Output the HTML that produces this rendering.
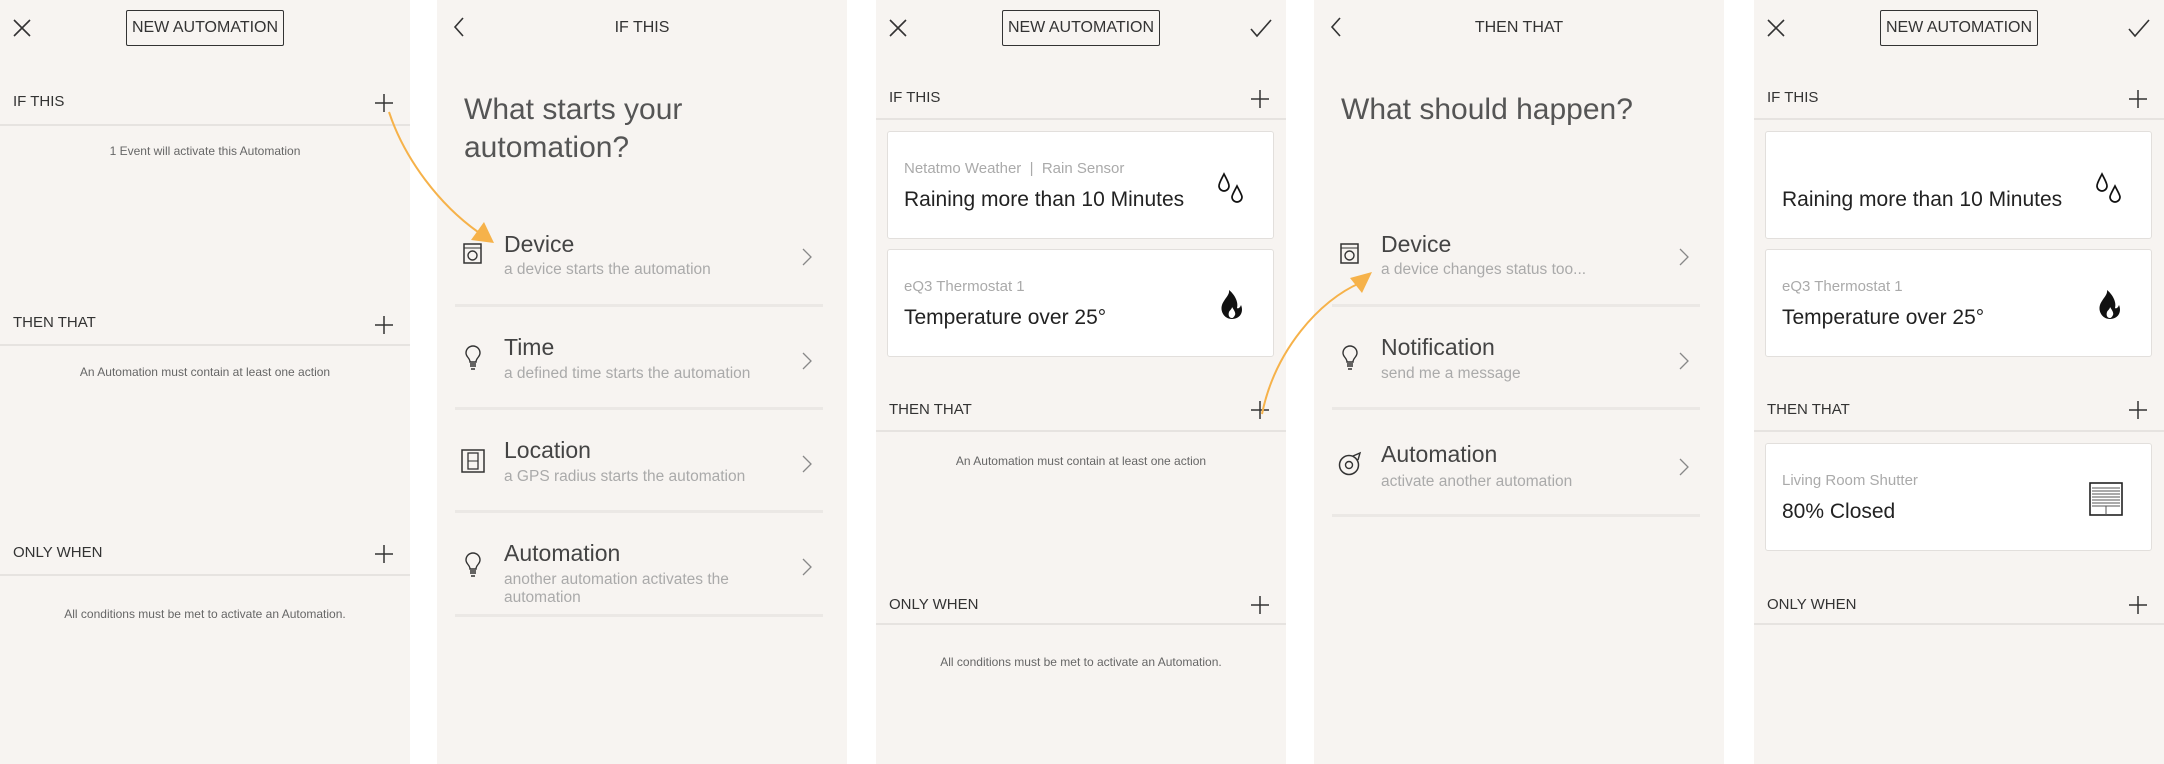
<!DOCTYPE html>
<html><head><meta charset="utf-8"><style>
*{margin:0;padding:0;box-sizing:border-box}
body{width:2164px;height:764px;background:#fff;position:relative;overflow:hidden;font-family:"Liberation Sans",sans-serif;color:#333}
.p{position:absolute;top:0;width:410px;height:764px;background:#f7f4f1}
.a{position:absolute;white-space:nowrap}
.hl{position:absolute;left:0;right:0;height:2px;background:#e6e3e0}
.sep{position:absolute;left:18px;right:24px;height:3px;background:#ebe8e5}
.lab{font-size:15px;color:#333;left:13px}
.sm{font-size:12px;color:#666;left:0;right:0;text-align:center}
.box{position:absolute;border:1.5px solid #333;border-radius:2px;font-size:16px;text-align:center;line-height:33px;height:36px}
.ttl{font-size:16px;left:0;right:0;text-align:center;color:#333}
.h{font-size:30px;color:#555;left:27px;line-height:38px}
.it{font-size:23px;color:#444;left:67px}
.sub{font-size:15.5px;color:#aaa;left:67px;line-height:18px}
.card{position:absolute;left:11px;right:12px;background:#fff;border:1.5px solid #e2dfdc;border-radius:3px}
.cl{font-size:15px;color:#aaa;left:16px}
.cm{font-size:21px;color:#222;left:16px}
svg{position:absolute;overflow:visible}
</style></head><body>

<!-- Panel 1 -->
<div class="p" style="left:0">
<svg style="left:13px;top:19px" width="18" height="18"><path d="M1 1L17 17M17 1L1 17" stroke="#333" stroke-width="1.6"/></svg>
<div class="box" style="left:126px;top:10px;width:158px">NEW AUTOMATION</div>
<div class="a lab" style="top:93px">IF THIS</div>
<svg style="left:375px;top:94px" width="18" height="18"><path d="M9 0V18M0 9H18" stroke="#333" stroke-width="1.5"/></svg>
<div class="hl" style="top:124px"></div>
<div class="a sm" style="top:144px">1 Event will activate this Automation</div>
<div class="a lab" style="top:314px">THEN THAT</div>
<svg style="left:375px;top:316px" width="18" height="18"><path d="M9 0V18M0 9H18" stroke="#333" stroke-width="1.5"/></svg>
<div class="hl" style="top:344px"></div>
<div class="a sm" style="top:365px">An Automation must contain at least one action</div>
<div class="a lab" style="top:544px">ONLY WHEN</div>
<svg style="left:375px;top:545px" width="18" height="18"><path d="M9 0V18M0 9H18" stroke="#333" stroke-width="1.5"/></svg>
<div class="hl" style="top:574px"></div>
<div class="a sm" style="top:607px">All conditions must be met to activate an Automation.</div>
</div>

<!-- Panel 2 -->
<div class="p" style="left:437px">
<svg style="left:16px;top:17px" width="12" height="20"><path d="M10 1L2 10L10 19" stroke="#333" stroke-width="1.6" fill="none"/></svg>
<div class="a ttl" style="top:19px">IF THIS</div>
<div class="a h" style="top:91px">What starts your<br>automation?</div>
<svg style="left:26px;top:243px" width="20" height="22"><rect x="1" y="1" width="17" height="19" fill="none" stroke="#333" stroke-width="1.5"/><path d="M1 5H18" stroke="#333"/><circle cx="9.5" cy="12.5" r="4.5" fill="none" stroke="#333" stroke-width="1.4"/></svg>
<div class="a it" style="top:231px">Device</div>
<div class="a sub" style="top:261px">a device starts the automation</div>
<svg style="left:365px;top:248px" width="10" height="18"><path d="M1 1L9 9L1 17" stroke="#888" stroke-width="1.3" fill="none"/></svg>
<div class="sep" style="top:304px"></div>
<svg style="left:28px;top:346px" width="16" height="24"><path d="M5 16C5 12 1 11 1 7A7 7 0 0 1 15 7C15 11 11 12 11 16ZM5 18H11M5 20H11M6 23H10" stroke="#333" stroke-width="1.4" fill="none"/></svg>
<div class="a it" style="top:334px">Time</div>
<div class="a sub" style="top:365px">a defined time starts the automation</div>
<svg style="left:365px;top:352px" width="10" height="18"><path d="M1 1L9 9L1 17" stroke="#888" stroke-width="1.3" fill="none"/></svg>
<div class="sep" style="top:407px"></div>
<svg style="left:24px;top:449px" width="24" height="24"><rect x="1" y="1" width="22" height="22" fill="none" stroke="#333" stroke-width="1.5"/><rect x="7" y="4" width="10" height="16" fill="none" stroke="#333" stroke-width="1.3"/><path d="M7 12H17" stroke="#333"/></svg>
<div class="a it" style="top:437px">Location</div>
<div class="a sub" style="top:468px">a GPS radius starts the automation</div>
<svg style="left:365px;top:455px" width="10" height="18"><path d="M1 1L9 9L1 17" stroke="#888" stroke-width="1.3" fill="none"/></svg>
<div class="sep" style="top:510px"></div>
<svg style="left:28px;top:553px" width="16" height="24"><path d="M5 16C5 12 1 11 1 7A7 7 0 0 1 15 7C15 11 11 12 11 16ZM5 18H11M5 20H11M6 23H10" stroke="#333" stroke-width="1.4" fill="none"/></svg>
<div class="a it" style="top:540px">Automation</div>
<div class="a sub" style="top:571px">another automation activates the<br>automation</div>
<svg style="left:365px;top:558px" width="10" height="18"><path d="M1 1L9 9L1 17" stroke="#888" stroke-width="1.3" fill="none"/></svg>
<div class="sep" style="top:614px"></div>
</div>

<!-- Panel 3 -->
<div class="p" style="left:876px">
<svg style="left:13px;top:19px" width="18" height="18"><path d="M1 1L17 17M17 1L1 17" stroke="#333" stroke-width="1.6"/></svg>
<div class="box" style="left:126px;top:10px;width:158px">NEW AUTOMATION</div>
<svg style="left:374px;top:19px" width="22" height="18"><path d="M1 10L7 17L21 1" stroke="#333" stroke-width="1.6" fill="none"/></svg>
<div class="a lab" style="top:89px">IF THIS</div>
<svg style="left:375px;top:90px" width="18" height="18"><path d="M9 0V18M0 9H18" stroke="#333" stroke-width="1.5"/></svg>
<div class="hl" style="top:118px"></div>
<div class="card" style="top:131px;height:108px">
<div class="a cl" style="top:28px">Netatmo Weather &nbsp;|&nbsp; Rain Sensor</div>
<div class="a cm" style="top:56px">Raining more than 10 Minutes</div>
<svg style="left:330px;top:41px" width="28" height="32"><path d="M6 1C3 7 1 10 1 13A5 5 0 0 0 11 13C11 10 9 7 6 1Z" fill="none" stroke="#111" stroke-width="1.7"/><path d="M19 13C16 19 14 22 14 24A5 5 0 0 0 24 24C24 22 22 19 19 13Z" fill="none" stroke="#111" stroke-width="1.7"/></svg>
</div>
<div class="card" style="top:249px;height:108px">
<div class="a cl" style="top:28px">eQ3 Thermostat 1</div>
<div class="a cm" style="top:56px">Temperature over 25°</div>
<svg style="left:332px;top:39px" width="24" height="32"><path d="M9 1C10 6 4 10 2 16C0 22 4 30 12 30C20 30 24 23 21 16C20 19 18 20 17 19C19 12 13 4 9 1Z M12 29C9 29 8 26 9 23C10 21 12 20 12 18C14 21 16 24 15 26C14 28 13 29 12 29Z" fill="#111" fill-rule="evenodd"/></svg>
</div>
<div class="a lab" style="top:401px">THEN THAT</div>
<svg style="left:375px;top:401px" width="18" height="18"><path d="M9 0V18M0 9H18" stroke="#333" stroke-width="1.5"/></svg>
<div class="hl" style="top:430px"></div>
<div class="a sm" style="top:454px">An Automation must contain at least one action</div>
<div class="a lab" style="top:596px">ONLY WHEN</div>
<svg style="left:375px;top:596px" width="18" height="18"><path d="M9 0V18M0 9H18" stroke="#333" stroke-width="1.5"/></svg>
<div class="hl" style="top:623px"></div>
<div class="a sm" style="top:655px">All conditions must be met to activate an Automation.</div>
</div>

<!-- Panel 4 -->
<div class="p" style="left:1314px">
<svg style="left:16px;top:17px" width="12" height="20"><path d="M10 1L2 10L10 19" stroke="#333" stroke-width="1.6" fill="none"/></svg>
<div class="a ttl" style="top:19px">THEN THAT</div>
<div class="a h" style="top:91px">What should happen?</div>
<svg style="left:26px;top:243px" width="20" height="22"><rect x="1" y="1" width="17" height="19" fill="none" stroke="#333" stroke-width="1.5"/><path d="M1 5H18" stroke="#333"/><circle cx="9.5" cy="12.5" r="4.5" fill="none" stroke="#333" stroke-width="1.4"/></svg>
<div class="a it" style="top:231px">Device</div>
<div class="a sub" style="top:261px">a device changes status too...</div>
<svg style="left:365px;top:248px" width="10" height="18"><path d="M1 1L9 9L1 17" stroke="#888" stroke-width="1.3" fill="none"/></svg>
<div class="sep" style="top:304px"></div>
<svg style="left:28px;top:346px" width="16" height="24"><path d="M5 16C5 12 1 11 1 7A7 7 0 0 1 15 7C15 11 11 12 11 16ZM5 18H11M5 20H11M6 23H10" stroke="#333" stroke-width="1.4" fill="none"/></svg>
<div class="a it" style="top:334px">Notification</div>
<div class="a sub" style="top:365px">send me a message</div>
<svg style="left:365px;top:352px" width="10" height="18"><path d="M1 1L9 9L1 17" stroke="#888" stroke-width="1.3" fill="none"/></svg>
<div class="sep" style="top:407px"></div>
<svg style="left:24px;top:452px" width="26" height="24"><circle cx="11" cy="13" r="9.5" fill="none" stroke="#333" stroke-width="1.5"/><circle cx="11" cy="13" r="3.5" fill="none" stroke="#333" stroke-width="1.4"/><path d="M15 4L22 1L20 8" stroke="#333" stroke-width="1.4" fill="none"/></svg>
<div class="a it" style="top:441px">Automation</div>
<div class="a sub" style="top:473px">activate another automation</div>
<svg style="left:365px;top:458px" width="10" height="18"><path d="M1 1L9 9L1 17" stroke="#888" stroke-width="1.3" fill="none"/></svg>
<div class="sep" style="top:514px"></div>
</div>

<!-- Panel 5 -->
<div class="p" style="left:1754px">
<svg style="left:13px;top:19px" width="18" height="18"><path d="M1 1L17 17M17 1L1 17" stroke="#333" stroke-width="1.6"/></svg>
<div class="box" style="left:126px;top:10px;width:158px">NEW AUTOMATION</div>
<svg style="left:374px;top:19px" width="22" height="18"><path d="M1 10L7 17L21 1" stroke="#333" stroke-width="1.6" fill="none"/></svg>
<div class="a lab" style="top:89px">IF THIS</div>
<svg style="left:375px;top:90px" width="18" height="18"><path d="M9 0V18M0 9H18" stroke="#333" stroke-width="1.5"/></svg>
<div class="hl" style="top:118px"></div>
<div class="card" style="top:131px;height:108px">
<div class="a cm" style="top:56px">Raining more than 10 Minutes</div>
<svg style="left:330px;top:41px" width="28" height="32"><path d="M6 1C3 7 1 10 1 13A5 5 0 0 0 11 13C11 10 9 7 6 1Z" fill="none" stroke="#111" stroke-width="1.7"/><path d="M19 13C16 19 14 22 14 24A5 5 0 0 0 24 24C24 22 22 19 19 13Z" fill="none" stroke="#111" stroke-width="1.7"/></svg>
</div>
<div class="card" style="top:249px;height:108px">
<div class="a cl" style="top:28px">eQ3 Thermostat 1</div>
<div class="a cm" style="top:56px">Temperature over 25°</div>
<svg style="left:332px;top:39px" width="24" height="32"><path d="M9 1C10 6 4 10 2 16C0 22 4 30 12 30C20 30 24 23 21 16C20 19 18 20 17 19C19 12 13 4 9 1Z M12 29C9 29 8 26 9 23C10 21 12 20 12 18C14 21 16 24 15 26C14 28 13 29 12 29Z" fill="#111" fill-rule="evenodd"/></svg>
</div>
<div class="a lab" style="top:401px">THEN THAT</div>
<svg style="left:375px;top:401px" width="18" height="18"><path d="M9 0V18M0 9H18" stroke="#333" stroke-width="1.5"/></svg>
<div class="hl" style="top:430px"></div>
<div class="card" style="top:443px;height:108px">
<div class="a cl" style="top:28px">Living Room Shutter</div>
<div class="a cm" style="top:56px">80% Closed</div>
<svg style="left:323px;top:38px" width="34" height="34"><rect x="1" y="1" width="32" height="32" fill="none" stroke="#222" stroke-width="1.6"/><path d="M3 6H31M3 9H31M3 12H31M3 15H31M3 18H31M3 21H31M3 24H31M17 24V33" stroke="#555" stroke-width="1"/></svg>
</div>
<div class="a lab" style="top:596px">ONLY WHEN</div>
<svg style="left:375px;top:596px" width="18" height="18"><path d="M9 0V18M0 9H18" stroke="#333" stroke-width="1.5"/></svg>
<div class="hl" style="top:623px"></div>
</div>

<!-- Arrows -->
<svg style="left:0;top:0" width="2164" height="764">
<path d="M389 112C405 160 440 205 478 232" stroke="#f6b24a" stroke-width="2" fill="none"/>
<path d="M494 243L471 240L484 222Z" fill="#f6b24a"/>
<path d="M1262 414C1275 350 1320 300 1360 283" stroke="#f6b24a" stroke-width="2" fill="none"/>
<path d="M1372 272L1362 293L1350 278Z" fill="#f6b24a"/>
</svg>
</body></html>
